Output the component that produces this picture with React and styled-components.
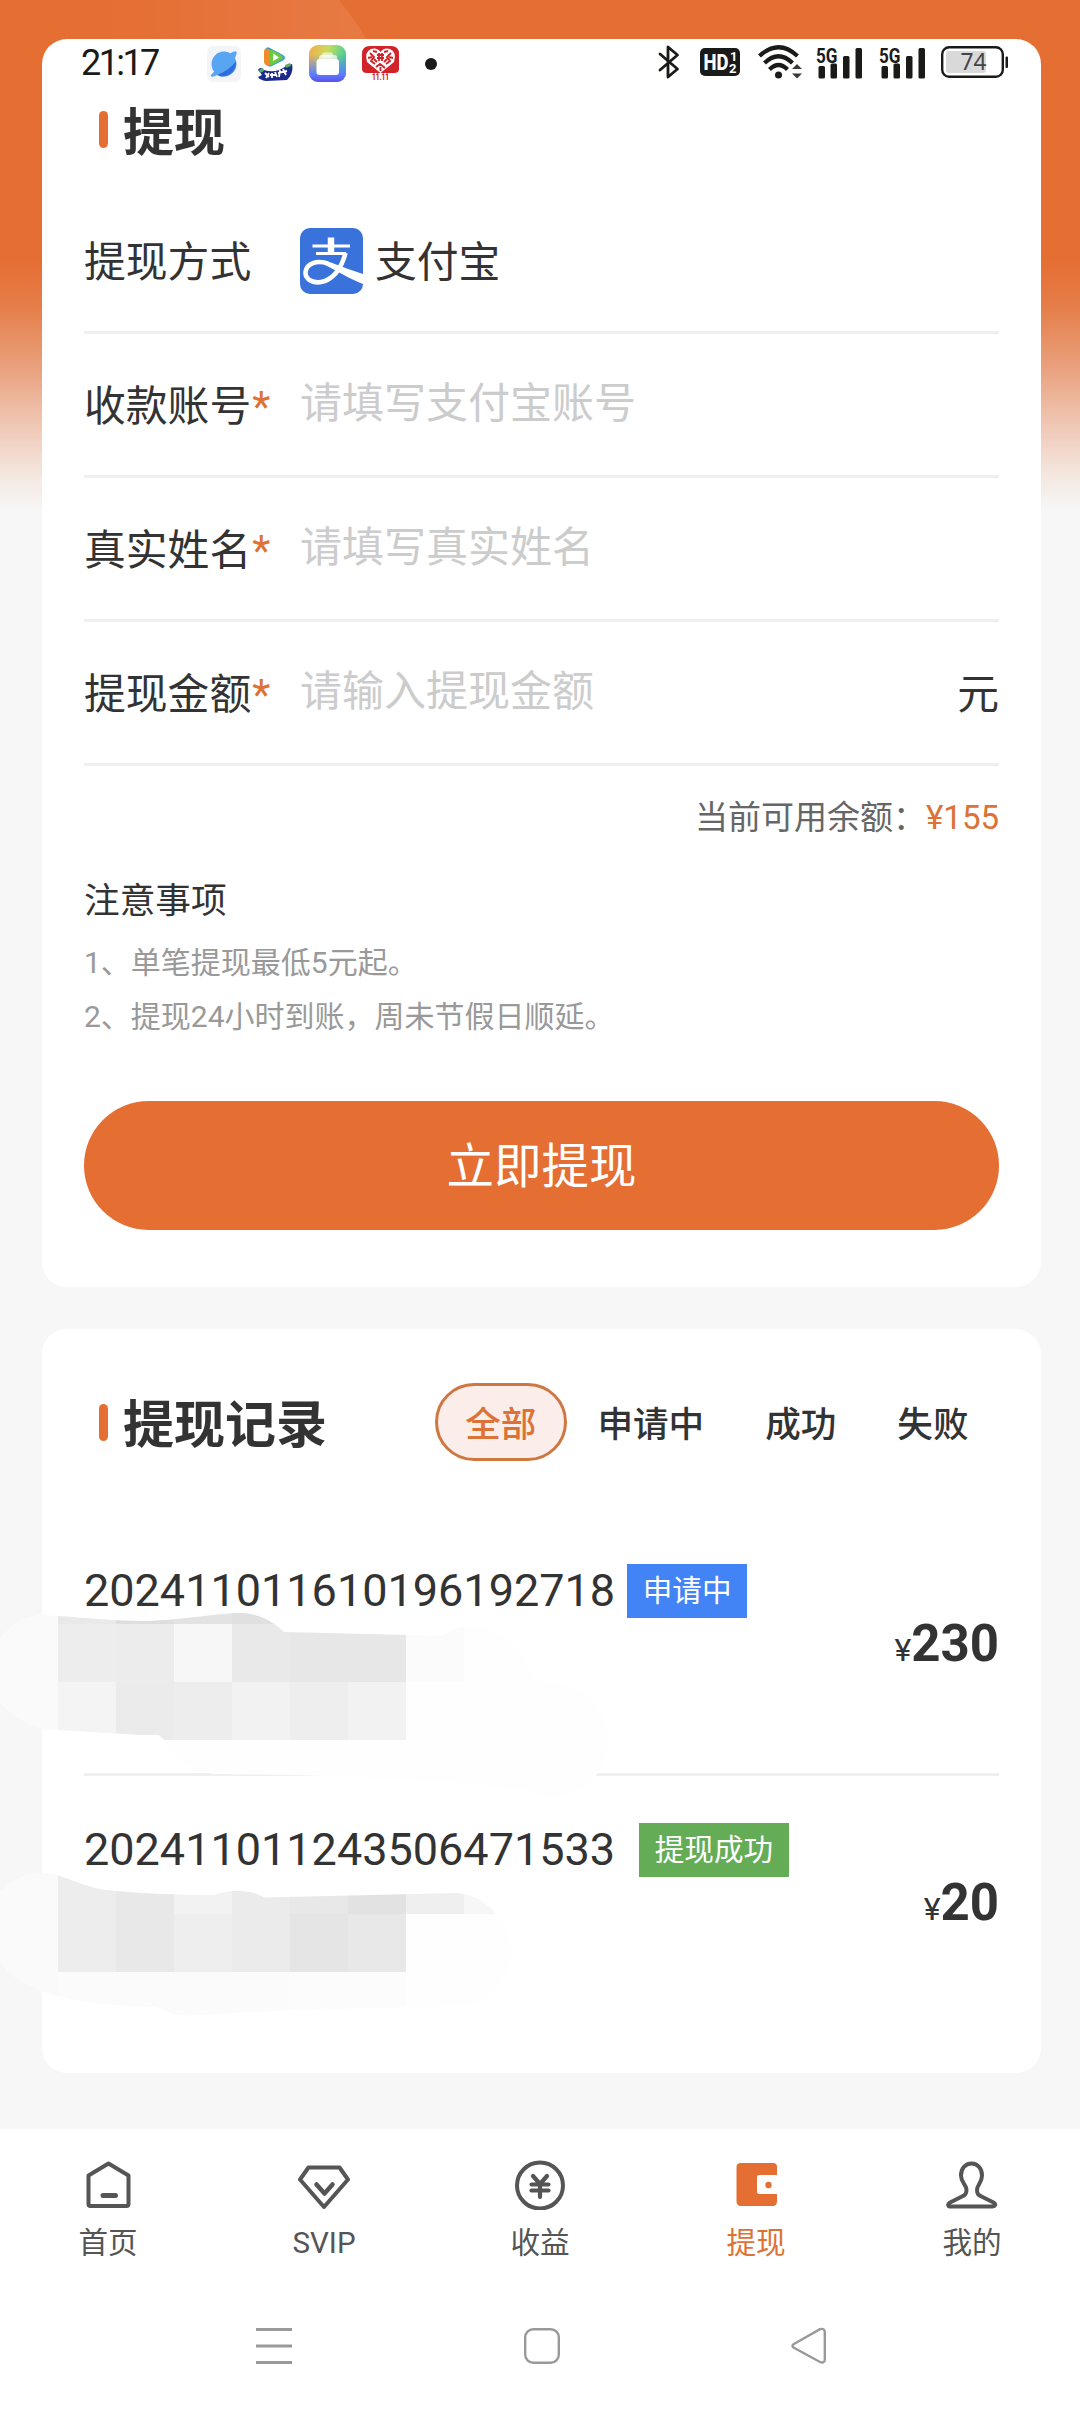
import React from "react";
import styled, { createGlobalStyle } from "styled-components";

const ORANGE = "#e56e33";

const tabs = ["全部", "申请中", "成功", "失败"];

const fields = [
  { label: "收款账号", placeholder: "请填写支付宝账号" },
  { label: "真实姓名", placeholder: "请填写真实姓名" },
  { label: "提现金额", placeholder: "请输入提现金额", unit: "元" },
];

const records = [
  {
    no: "202411011610196192718",
    status: "申请中",
    color: "#4284f5",
    gap: 12,
    amount: "230",
    top: 1517,
    blob:
      "M0 1640C10 1624 24 1616 42 1615L58 1616C90 1618 115 1621 145 1621C185 1620 215 1613 242 1613C260 1614 274 1622 284 1632L430 1635.500C448 1636 450 1632 458 1628C480 1620 515 1632 535 1680C580 1684 606 1700 607 1740C606 1756 601 1768 596 1776C580 1796 555 1800 530 1792C490 1782 400 1778 290 1775L212 1774C190 1768 172 1755 164 1740L159 1735L140 1735L42 1729C22 1722 8 1712 0 1702Z",
    rows: [
      [1610, 14, ["#e9e9e9", "#dedede", "#e3e3e3", "#e0e0e0"]],
      [1624, 58, ["#ededed", "#ececec", "#f7f7f7", "#e9e9e9", "#e7e7e7", "#e7e7e7", "#fbfbfb"]],
      [1682, 58, ["#f4f4f4", "#ebebeb", "#ededed", "#f2f2f2", "#eeeeee", "#f2f2f2"]],
    ],
  },
  {
    no: "202411011243506471533",
    status: "提现成功",
    color: "#64ad56",
    gap: 24,
    amount: "20",
    top: 1776,
    blob:
      "M0 1892C14 1878 28 1873 42 1873C52 1873 56 1874 60 1876C78 1882 90 1888 106 1890C130 1893 180 1895 214 1895C224 1892 228 1891 236 1891C250 1891 256 1893 264 1897.500L330 1896L455 1893C470 1893 484 1900 496 1914C506 1926 510 1940 510 1955C508 1980 490 2002 465 2006L290 2010L190 2015.500C172 2016 166 2010 155 2007C110 2006 70 2002 42 1991C20 1982 6 1972 0 1962Z",
    rows: [
      [1870, 44, ["#ededed", "#e8e8e8", "#f2f2f2", "#ebebeb", "#e8e8e8", "#e2e2e2", "#efefef", "#f7f7f7"]],
      [1914, 58, ["#ededed", "#e8e8e8", "#eeeeee", "#ebebeb", "#e5e5e5", "#e8e8e8"]],
      [1972, 50, ["#fbfbfb", "#fbfbfb", "#fbfbfb", "#fbfbfb", "#fcfcfc", "#fcfcfc"]],
    ],
  },
];

const Signal = () => (
  <SignalSvg width="48" height="46" viewBox="0 -6 48 46">
    <text x="1" y="16.500" fontSize="21" fontWeight="700" fontFamily="Roboto" textLength="21.500" lengthAdjust="spacingAndGlyphs" fill="#1a1a18">
      5G
    </text>
    <g fill="#1a1a18">
      <rect x="3.500" y="20" width="6.500" height="12.500" rx="1.500" />
      <rect x="15.500" y="17.500" width="6.500" height="15" rx="1.500" />
      <rect x="28" y="10" width="6.500" height="22.500" rx="1.500" />
      <rect x="40.500" y="2" width="6.500" height="30.500" rx="1.500" />
    </g>
  </SignalSvg>
);

const StatusBar = () => (
  <Status>
    <Time>21:17</Time>
    <AppIcons>
      <svg width="34" height="36" viewBox="0 0 34 36">
        <rect width="34" height="36" rx="7" fill="#f2f4f8" />
        <circle cx="17" cy="18" r="12.500" fill="#57a5f3" />
        <path d="M4 29C3 31 6 31.500 10 29C19 26 26 19 29.500 8C30.500 4 27 5 24 7Z" fill="#57a5f3" />
        <path d="M29 15C25 21 18 26 10 29L14 30.500C23 31 30 24 29 15Z" fill="#2f6be0" />
      </svg>
      <svg width="35" height="34" viewBox="0 0 35 34">
        <path d="M7 3Q8 -1 12 1L25 8Q29 10.500 25 13.500L13 19.500Q8 20 7 15Z" fill="#3a9be8" />
        <path d="M6 5Q6 0 11 2L13 18Q7 20 6 15Z" fill="#f08b2c" />
        <path d="M11 4Q12 2 14 3L23 8Q27 10.500 23 13L14 18Q11 18 11 15Z" fill="#6bcb3c" />
        <path d="M15 6.500L21 10.500L15 14Z" fill="#fff" />
        <path d="M0 23Q2 19 6 23Q18 27 28 19L34 17Q36 26 29 33L8 34Q2 33 0 30L4 28Z" fill="#1c2a8c" />
        <path d="M1 23L5 21L6 24L2 26ZM27 18L32 16L33 19L28 21Z" fill="#57b060" />
        <path d="M7 26L11 30M11 26L8 31M14 26V31M17 25L19 30M22 23L21 30M25 22L28 28M20 26L29 24M12 28H18" stroke="#fff" strokeWidth="1.800" />
      </svg>
      <svg width="37" height="37" viewBox="0 0 37 37">
        <defs>
          <linearGradient id="folderA" x1="0" y1="0" x2="1" y2="0.300">
            <stop offset="0" stopColor="#f8a84c" />
            <stop offset="0.500" stopColor="#c9dc5c" />
            <stop offset="1" stopColor="#3fcf9b" />
          </linearGradient>
          <linearGradient id="folderB" x1="0" y1="0" x2="0" y2="1">
            <stop offset="0.250" stopColor="#5a7dfc" stopOpacity="0" />
            <stop offset="0.800" stopColor="#5a7dfc" />
            <stop offset="1" stopColor="#5b50ea" />
          </linearGradient>
        </defs>
        <rect width="37" height="37" rx="9" fill="url(#folderA)" />
        <rect width="37" height="37" rx="9" fill="url(#folderB)" />
        <rect x="13" y="7.500" width="11" height="5" rx="2" fill="#fff" opacity="0.600" />
        <rect x="10" y="10" width="18" height="8" rx="2.500" fill="#fff" opacity="0.700" />
        <rect x="7.500" y="14" width="22.500" height="16" rx="3" fill="#fff" />
      </svg>
      <svg width="37" height="37" viewBox="0 0 37 37">
        <path d="M8 1H29Q37 1 37 9V24Q37 28 32 28H5Q0 28 0 24V9Q0 1 8 1Z" fill="#d2232a" />
        <path d="M18.500 28L5 17Q2 7 9 4Q15 2 18.500 7Q22 2 28 4Q35 7 32 17Z" fill="#fff" />
        <path d="M8 8L12 12L9 16L13 19M29 8L25 12L28 16L24 19M15 10H22M15 13H22M17 8V16M20 8V16M14 22L18 19L23 23M11 6L15 7M26 6L22 7M6 13L10 12M31 13L27 12M12 14L15 17M25 14L22 17M18.500 22V26" fill="none" stroke="#d2232a" strokeWidth="1.900" />
        <text x="10" y="35" fontSize="9.500" fontWeight="900" fontFamily="Roboto" textLength="17" lengthAdjust="spacingAndGlyphs" fill="#d2232a">
          11.11
        </text>
      </svg>
      <MoreDot />
    </AppIcons>
    <SystemIcons>
      <svg width="22" height="36" viewBox="0 0 22 36">
        <path d="M2 10L19.500 25L10 33V3L19.500 11L2 26" fill="none" stroke="#1a1a18" strokeWidth="2.800" strokeLinejoin="round" strokeLinecap="round" />
      </svg>
      <HdSvg width="40" height="28" viewBox="0 0 40 28">
        <rect width="40" height="28" rx="5" fill="#1a1a18" />
        <text x="3.500" y="22" fontSize="22" fontWeight="800" fontFamily="Roboto" textLength="25" lengthAdjust="spacingAndGlyphs" fill="#fff">
          HD
        </text>
        <text x="30" y="13" fontSize="13" fontWeight="700" fontFamily="Roboto" fill="#fff">
          1
        </text>
        <text x="29" y="25" fontSize="13" fontWeight="700" fontFamily="Roboto" fill="#fff">
          2
        </text>
      </HdSvg>
      <WifiSvg width="45" height="36" viewBox="0 0 45 36">
        <g fill="none" stroke="#1a1a18" strokeWidth="4.200">
          <path d="M1.500 12Q20.500 -5.500 39.500 12" />
          <path d="M6.500 19Q20.500 5.500 34.500 19" />
          <path d="M11.500 25.500Q20.500 16.500 29.500 25.500" />
        </g>
        <circle cx="20.500" cy="31" r="3.500" fill="#1a1a18" />
        <path d="M34 25L39 20L44 25ZM34 29.500H44L39 34.500Z" fill="#3a3a38" />
      </WifiSvg>
      <Signal />
      <Signal />
      <svg width="68" height="32" viewBox="0 0 68 32">
        <rect x="1.200" y="1.200" width="60.600" height="29.600" rx="7" fill="none" stroke="#1a1a18" strokeWidth="2.400" />
        <rect x="5" y="5" width="40" height="22" rx="3" fill="#d9d9d9" />
        <rect x="64.500" y="10.500" width="2.500" height="11.500" rx="1" fill="#1a1a18" />
        <text x="19.500" y="24" fontSize="23" fontFamily="Noto Sans" textLength="26" lengthAdjust="spacingAndGlyphs" fill="#444">
          74
        </text>
      </svg>
    </SystemIcons>
  </Status>
);

const Alipay = () => (
  <svg width="63" height="66" viewBox="0 0 63 66">
    <rect width="63" height="66" rx="10" fill="#3a72dc" />
    <g fill="none" stroke="#fff">
      <path d="M12.500 18H50M16 25.500H46" strokeWidth="3.200" />
      <path d="M31 9.500V26" strokeWidth="6.500" />
      <path d="M45.500 25C42 38 35 49 25 53C13 57 5 51 5.500 44C6.500 35 17 32 28 35.500" strokeWidth="4.600" />
    </g>
    <path d="M18 32C28 32 38 38 63 46V56C50 51 37 43 27 38Z" fill="#fff" />
  </svg>
);

const Mosaic = ({ id, top, blob, rows }) => (
  <MosaicSvg width="640" height="300" viewBox={`0 ${top} 640 300`}>
    <clipPath id={id}>
      <path d={blob} />
    </clipPath>
    <g clipPath={`url(#${id})`}>
      <rect y={top} width="640" height="300" fill="#fefefe" />
      <rect y={top} width="58" height="300" fill="#fafafa" />
      {rows.map(([y, h, cells]) =>
        cells.map((fill, i) => (
          <rect key={`${y}-${i}`} x={58 + i * 58} y={y} width="58" height={h} fill={fill} shapeRendering="crispEdges" />
        ))
      )}
    </g>
  </MosaicSvg>
);

const line = {
  fill: "none",
  stroke: "#555",
  strokeWidth: 4,
  strokeLinejoin: "round",
  strokeLinecap: "round",
};

const navItems = [
  {
    name: "首页",
    icon: (
      <g {...line}>
        <path d="M26.500 3.500L46.500 15.500V44Q46.500 46 44.500 46H8.500Q6.500 46 6.500 44V15.500Z" />
        <path d="M21 35.500H33.500" strokeWidth="5" />
      </g>
    ),
  },
  {
    name: "SVIP",
    icon: (
      <g {...line}>
        <path d="M10.500 7.500H41.500L50 19.500L26 47L2 19.500Z" />
        <path d="M18.500 24.500L26.500 33.500L34.500 24.500" strokeWidth="4.500" />
      </g>
    ),
  },
  {
    name: "收益",
    icon: (
      <g {...line}>
        <circle cx="26" cy="25.500" r="23" />
        <path d="M19 16L26 24L33 16M26 24V37M17.500 24.500H34.500M17.500 30.500H34.500" strokeWidth="4.200" />
      </g>
    ),
  },
  {
    name: "提现",
    active: true,
    icon: (
      <g fill={ORANGE}>
        <path d="M11 3H43Q47 3 47 7V15H29Q27 15 27 17V32Q27 34 29 34H47V41Q47 46 43 46H11Q6.500 46 6.500 41V7Q6.500 3 11 3Z" />
        <circle cx="38.500" cy="25" r="3.200" />
      </g>
    ),
  },
  {
    name: "我的",
    icon: (
      <g {...line}>
        <path d="M25.500 3.500C19 3.500 15 9 15 15.500C15 23 20.500 24.500 20.500 30C20.500 34 19 35 16 36.500L4 42.500C1 44.500 2 46.500 5 46.500H46.500C49 46.500 50.500 44.500 47.500 42.500L35.500 36.500C32.500 35 31 34 31 30C31 24.500 36 23 36 15.500C36 9 32 3.500 25.500 3.500Z" />
      </g>
    ),
  },
];

function App() {
  return (
    <Page>
      <GlobalStyle />
      <Backdrop>
        <svg width="1080" height="39" viewBox="0 0 1080 39">
          <defs>
            <linearGradient id="shine">
              <stop offset="0" stopColor="#fff" stopOpacity="0" />
              <stop offset="1" stopColor="#fff" stopOpacity="0.080" />
            </linearGradient>
          </defs>
          <path d="M100 0H339Q354 18 366 39H100Z" fill="url(#shine)" />
        </svg>
      </Backdrop>

      <Card>
        <Heading>
          <Bar />
          <Title>提现</Title>
        </Heading>
        <Row>
          <Label>提现方式</Label>
          <Method>
            <Alipay />
            <MethodName>支付宝</MethodName>
          </Method>
        </Row>
        {fields.map((field) => (
          <Row key={field.label}>
            <Label>
              {field.label}
              <Star>*</Star>
            </Label>
            <Placeholder>{field.placeholder}</Placeholder>
            {field.unit && <Unit>{field.unit}</Unit>}
          </Row>
        ))}
        <Balance>
          当前可用余额：<Money>¥155</Money>
        </Balance>
        <NoteTitle>注意事项</NoteTitle>
        <Note>1、单笔提现最低5元起。</Note>
        <Note>2、提现24小时到账，周未节假日顺延。</Note>
        <Submit>立即提现</Submit>
      </Card>

      <RecordCard>
        <RecordHead>
          <Bar $inline />
          <Title $inline>提现记录</Title>
          <Tabs>
            {tabs.map((tab, index) => (
              <Tab key={tab} $active={index === 0}>
                {tab}
              </Tab>
            ))}
          </Tabs>
        </RecordHead>
        {records.map((record, index) => (
          <Record key={record.no}>
            <Mosaic id={`mosaic${index}`} top={record.top} blob={record.blob} rows={record.rows} />
            <RecordInfo $gap={record.gap}>
              <RecordNo>{record.no}</RecordNo>
              <Badge $color={record.color}>{record.status}</Badge>
            </RecordInfo>
            <Amount>
              <Yen>¥</Yen>
              {record.amount}
            </Amount>
          </Record>
        ))}
      </RecordCard>

      <Bottom>
        <Nav>
          {navItems.map((item) => (
            <NavItem key={item.name} $active={item.active}>
              <svg width="52" height="50" viewBox="0 0 52 50">
                {item.icon}
              </svg>
              <NavName>{item.name}</NavName>
            </NavItem>
          ))}
        </Nav>
        <SystemNav>
          <svg width="36" height="38" viewBox="0 0 36 38">
            <path d="M0 2.500H36M0 19H36M0 35.500H36" stroke="#999" strokeWidth="3" />
          </svg>
          <svg width="36" height="38" viewBox="0 0 36 38">
            <rect x="1.200" y="2.200" width="33.600" height="33.600" rx="8" fill="none" stroke="#999" strokeWidth="2.400" />
          </svg>
          <svg width="36" height="38" viewBox="0 0 36 38">
            <path d="M2.500 17.200L29 2.200Q33.500 0.800 33.800 5V32.500Q33.500 36.800 29 35L2.500 20.600Q0.500 19 2.500 17.200Z" fill="none" stroke="#999" strokeWidth="2.400" />
          </svg>
        </SystemNav>
      </Bottom>

      <StatusBar />
    </Page>
  );
}

const GlobalStyle = createGlobalStyle`
  body {
    margin: 0;
    font-family: Roboto, "Noto Sans CJK SC", sans-serif;
    color: #333;
  }

  svg {
    display: block;
    flex-shrink: 0;
  }
`;

const Page = styled.div`
  position: relative;
  width: 1080px;
  height: 2412px;
  overflow: hidden;
  display: flex;
  flex-direction: column;
  background: linear-gradient(
      to bottom,
      ${ORANGE} 0,
      ${ORANGE} 260px,
      #e57d48 305px,
      #e9a27f 370px,
      #efc4b0 420px,
      #f4e6df 474px,
      #f7f7f7 510px
    )
    #f7f7f7;
`;

const Backdrop = styled.div`
  height: 39px;
`;

const Status = styled.div`
  position: absolute;
  top: 39px;
  left: 0;
  width: 1080px;
  height: 46px;
  display: flex;
  align-items: center;
`;

const Time = styled.div`
  width: 126px;
  padding: 1px 0 0 81px;
  font-size: 36px;
  letter-spacing: -2.600px;
  line-height: 46px;
  color: #1a1a18;
`;

const AppIcons = styled.div`
  display: flex;
  align-items: center;
  gap: 16px;
  padding-top: 3px;

  svg:first-child {
    margin-right: 1px;
  }
`;

const MoreDot = styled.div`
  width: 12px;
  height: 12px;
  margin-left: 10px;
  border-radius: 50%;
  background: #1a1a18;
`;

const SystemIcons = styled.div`
  display: flex;
  align-items: center;
  gap: 15px;
  margin-left: auto;
  padding-right: 71px;
`;

const HdSvg = styled.svg`
  margin: 0 3px 0 5px;
`;

const WifiSvg = styled.svg`
  margin-right: -3px;
`;

const SignalSvg = styled.svg`
  margin-top: 1px;
`;

const Card = styled.div`
  width: 915px;
  margin-left: 42px;
  padding: 60px 42px 57px;
  border-radius: 25px;
  background: #fff;
`;

const Heading = styled.div`
  height: 91px;
  display: flex;
  align-items: flex-start;
`;

const Bar = styled.div`
  width: 9px;
  height: 37px;
  margin: ${(props) => (props.$inline ? "0 0 0 15px" : "12px 0 0 15px")};
  border-radius: 5px;
  background: ${ORANGE};
`;

const Title = styled.div`
  margin-left: 15px;
  padding-top: ${(props) => (props.$inline ? "7px" : "0")};
  font-size: 51px;
  font-weight: 700;
  line-height: 69px;
`;

const Row = styled.div`
  height: 141px;
  display: flex;
  align-items: center;
  border-bottom: 3px solid #efefef;
  font-size: 41.800px;
  line-height: 60px;
`;

const Label = styled.div`
  width: 216px;
  padding-top: 5px;
`;

const Star = styled.span`
  margin-left: 1px;
  color: #dc7236;
`;

const Method = styled.div`
  display: flex;
  align-items: center;
`;

const MethodName = styled.div`
  margin-left: 12px;
  padding-top: 5px;
`;

const Placeholder = styled.div`
  padding-bottom: 2px;
  font-size: 42px;
  color: #ccc;
`;

const Unit = styled.div`
  margin-left: auto;
  padding-top: 5px;
`;

const Balance = styled.div`
  margin-top: 26px;
  text-align: right;
  font-size: 33px;
  line-height: 51px;
  height: 50px;
  color: #666;
`;

const Money = styled.span`
  color: #dc7236;
`;

const NoteTitle = styled.div`
  margin: 34px 0 10px;
  font-size: 35.700px;
  line-height: 50px;
`;

const Note = styled.div`
  font-size: 30px;
  line-height: 54px;
  color: #999;
`;

const Submit = styled.div`
  height: 129px;
  margin-top: 57px;
  border-radius: 65px;
  background: ${ORANGE};
  color: #fff;
  font-size: 47.500px;
  line-height: 133px;
  text-align: center;
`;

const RecordCard = styled(Card)`
  margin-top: 42px;
  padding: 54px 42px 41px;
`;

const RecordHead = styled.div`
  height: 78px;
  margin-bottom: 56px;
  display: flex;
  align-items: center;
`;

const Tabs = styled.div`
  display: flex;
  margin-left: auto;
`;

const Tab = styled.div`
  padding: 0 27.500px;
  border: 3px solid ${(props) => (props.$active ? "#cf7741" : "transparent")};
  border-radius: 39px;
  background: ${(props) => (props.$active ? "#faedea" : "transparent")};
  color: ${(props) => (props.$active ? "#dc7236" : "#333")};
  font-size: 35.600px;
  font-weight: 500;
  line-height: 78px;
  height: 72px;
`;

const Record = styled.div`
  position: relative;
  height: 256px;
  display: flex;
  justify-content: space-between;
  align-items: flex-start;

  &:not(:last-child) {
    border-bottom: 3px solid #efefef;
  }
`;

const MosaicSvg = styled.svg`
  position: absolute;
  left: -84px;
  top: 0;
`;

const RecordInfo = styled.div`
  position: relative;
  display: flex;
  align-items: center;
  gap: ${(props) => props.$gap}px;
  margin-top: 47px;
`;

const RecordNo = styled.div`
  font-size: 45px;
  line-height: 54px;
`;

const Badge = styled.div`
  height: 54px;
  padding: 0 15.600px;
  background: ${(props) => props.$color};
  color: #fff;
  font-size: 29.600px;
  line-height: 55px;
`;

const Amount = styled.div`
  margin-top: 97px;
  font-size: 51px;
  font-weight: 700;
  line-height: 60px;
`;

const Yen = styled.span`
  font-size: 32px;
  font-weight: 400;
`;

const Bottom = styled.div`
  height: 283px;
  margin-top: auto;
  background: #fff;
`;

const Nav = styled.div`
  display: flex;
  padding-top: 31px;
`;

const NavItem = styled.div`
  width: 216px;
  display: flex;
  flex-direction: column;
  align-items: center;
  color: ${(props) => (props.$active ? "#dc7236" : "#555")};
`;

const NavName = styled.div`
  margin-top: 13px;
  font-size: 29.600px;
  line-height: 40px;
`;

const SystemNav = styled.div`
  display: flex;
  gap: 231.500px;
  padding: 64px 0 0 256px;
`;

export default App;
